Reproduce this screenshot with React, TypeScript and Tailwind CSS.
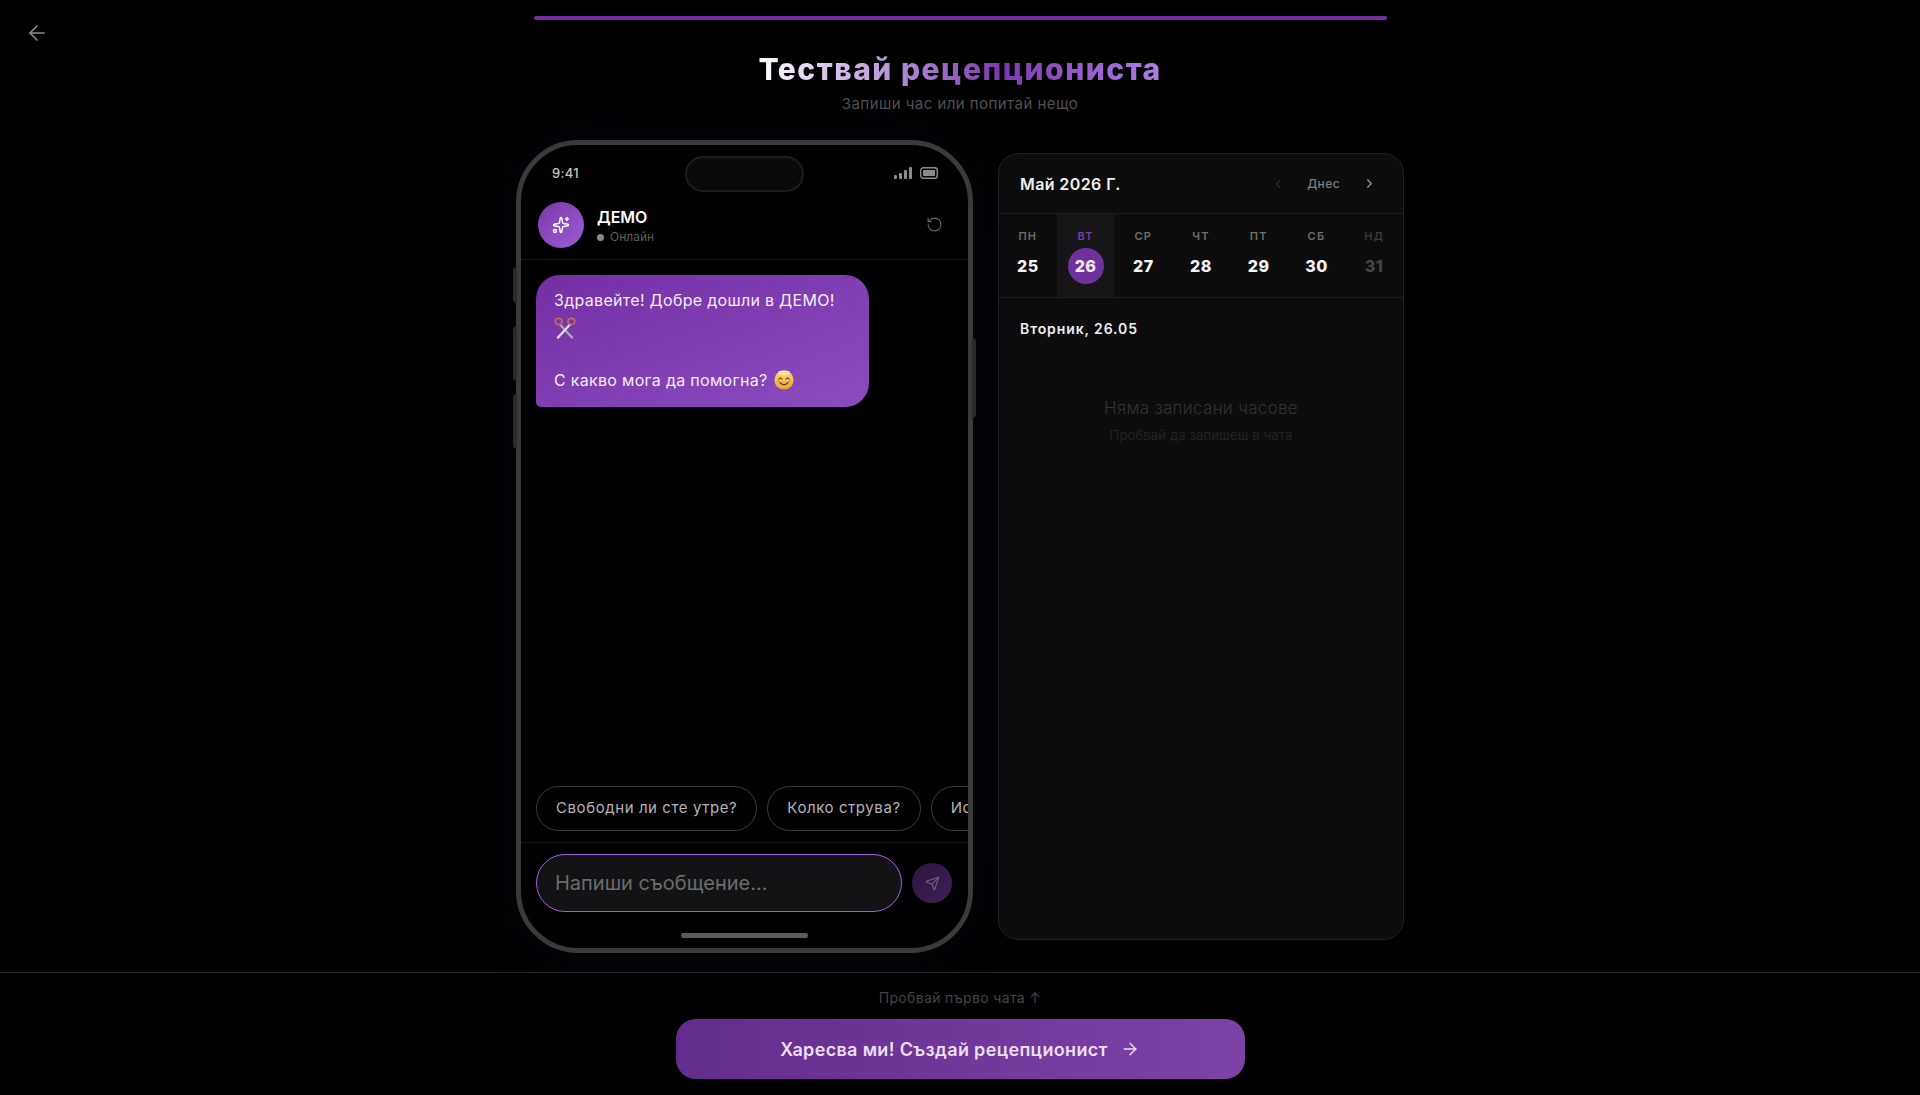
import { ArrowLeft, ArrowRight, ChevronLeft, ChevronRight, RotateCcw, Send, Sparkles } from "lucide-react";

const days = [
  { d: "ПН", n: "25" },
  { d: "ВТ", n: "26", active: true },
  { d: "СР", n: "27" },
  { d: "ЧТ", n: "28" },
  { d: "ПТ", n: "29" },
  { d: "СБ", n: "30" },
  { d: "НД", n: "31", dim: true },
];

function Scissors() {
  return (
    <svg width="22" height="22" viewBox="0 0 22 22" fill="none" className="inline-block align-[-6px]">
      <path d="M6.5 8 L18 20.5" stroke="#a9a9b0" strokeWidth="2.4" strokeLinecap="round" />
      <path d="M15.5 8 L4 20.5" stroke="#dcdce0" strokeWidth="2.4" strokeLinecap="round" />
      <ellipse cx="4.6" cy="4.4" rx="3.4" ry="3.1" stroke="#c9685e" strokeWidth="1.7" />
      <ellipse cx="17.4" cy="4.4" rx="3.4" ry="3.1" stroke="#c9685e" strokeWidth="1.7" />
    </svg>
  );
}

function Smile() {
  return (
    <svg width="20" height="20" viewBox="0 0 20 20" className="inline-block align-[-4px]">
      <defs>
        <linearGradient id="smileFace" x1="0" y1="0" x2="0" y2="1">
          <stop offset="0" stopColor="#f9dc7a" />
          <stop offset="1" stopColor="#eda52c" />
        </linearGradient>
      </defs>
      <circle cx="10" cy="10" r="9.6" fill="url(#smileFace)" />
      <ellipse cx="10" cy="2.6" rx="5.2" ry="1.5" fill="none" stroke="#fff4d6" strokeWidth="1.1" />
      <circle cx="4.6" cy="11.6" r="2" fill="#f29a5c" opacity="0.7" />
      <circle cx="15.4" cy="11.6" r="2" fill="#f29a5c" opacity="0.7" />
      <path d="M4.8 9 Q6.4 7 8 9" stroke="#5a3a14" strokeWidth="1.2" fill="none" strokeLinecap="round" />
      <path d="M12 9 Q13.6 7 15.2 9" stroke="#5a3a14" strokeWidth="1.2" fill="none" strokeLinecap="round" />
      <path d="M6 12.6 Q10 16.8 14 12.6" stroke="#5a3a14" strokeWidth="1.3" fill="none" strokeLinecap="round" />
    </svg>
  );
}

function Phone() {
  return (
    <div className="relative h-[813px] w-[457px] shrink-0">
      <div className="absolute left-[-3px] top-[127px] h-[36px] w-[4px] rounded-l-sm bg-[#2a2a2c]" />
      <div className="absolute left-[-3px] top-[186px] h-[55px] w-[4px] rounded-l-sm bg-[#2a2a2c]" />
      <div className="absolute left-[-3px] top-[254px] h-[55px] w-[4px] rounded-l-sm bg-[#2a2a2c]" />
      <div className="absolute right-[-3px] top-[198px] h-[80px] w-[4px] rounded-r-sm bg-[#2a2a2c]" />
      <div className="flex h-full w-full flex-col overflow-hidden rounded-[62px] border-[5px] border-[#3a3a3b] bg-black shadow-[0_0_60px_rgba(60,20,90,0.16)]">
        <div className="relative flex h-[57px] shrink-0 items-start justify-between pl-[31px] pr-[30px] pt-[20px]">
          <span className="text-[13px] font-medium leading-[16px] tracking-[0.3px] text-[#c4c4c4]">9:41</span>
          <div className="absolute left-[164px] top-[11px] h-[36px] w-[119px] rounded-full border-2 border-[#1c1c1e] bg-[#0a0a0c]" />
          <div className="flex items-center gap-[7px] pt-[1px]">
            <svg width="19" height="13" viewBox="0 0 19 13" fill="#8c8c8c">
              <rect x="0" y="9" width="3" height="4" rx="1" />
              <rect x="5" y="7" width="3" height="6" rx="1" />
              <rect x="10" y="4" width="3" height="9" rx="1" />
              <rect x="15" y="1" width="3" height="12" rx="1" />
            </svg>
            <svg width="18" height="12" viewBox="0 0 18 12" fill="none">
              <rect x="0.75" y="0.75" width="16.5" height="10.5" rx="2.5" stroke="#8c8c8c" strokeWidth="1.4" />
              <rect x="3" y="3" width="12" height="6" rx="1" fill="#8c8c8c" />
            </svg>
          </div>
        </div>
        <div className="flex h-[58px] shrink-0 items-start justify-between border-b border-[#141416] pl-[17px] pr-[25px]">
          <div className="flex items-start gap-[13px]">
            <div className="flex h-[46px] w-[46px] items-center justify-center rounded-full bg-gradient-to-br from-[#7b38a8] to-[#9c5cd4] text-white">
              <Sparkles size={18} strokeWidth={2} />
            </div>
            <div className="flex flex-col pt-[5px]">
              <span className="text-[16px] font-semibold leading-[20px] text-white">ДЕМО</span>
              <span className="mt-[1px] flex items-center gap-[6px] text-[12px] leading-[18px] text-[#5f5f5f]">
                <span className="h-[7px] w-[7px] rounded-full bg-[#8a8a8a]" />
                Онлайн
              </span>
            </div>
          </div>
          <RotateCcw size={17} strokeWidth={1.5} className="mt-[14px] text-[#6a6a6a]" />
        </div>
        <div className="flex-1 px-[15px] pt-[15px]">
          <div className="w-[333px] rounded-[24px] rounded-bl-[5px] bg-gradient-to-br from-[#742fa3] to-[#8c4cc0] px-[18px] pt-[12px] pb-[13px] text-[16px] leading-[26.7px] tracking-[0.3px] text-[#f3ecf8]">
            <p>Здравейте! Добре дошли в ДЕМО!</p>
            <p><Scissors /></p>
            <p className="mt-[26.7px]">
              С какво мога да помогна? <span className="ml-[2px]"><Smile /></span>
            </p>
          </div>
        </div>
        <div className="flex shrink-0 gap-[10px] overflow-hidden pb-[11px] pl-[15px]">
          {["Свободни ли сте утре?", "Колко струва?", "Искам да запиша час"].map((c) => (
            <div key={c} className="flex h-[45px] shrink-0 items-center rounded-full border border-[#3c3c3e] px-[19px] text-[15px] tracking-[0.58px] text-[#b4b4b4]">
              {c}
            </div>
          ))}
        </div>
        <div className="flex shrink-0 items-center gap-[10px] border-t border-[#141416] pl-[15px] pr-[16px] pt-[11px]">
          <div className="flex h-[58px] w-[366px] items-center rounded-full border-[1.5px] border-[#a45ee5] bg-[#131315] pl-[18px] text-[20px] text-[#6c6c6c]">
            Напиши съобщение...
          </div>
          <div className="flex h-[40px] w-[40px] items-center justify-center rounded-full bg-gradient-to-br from-[#2c1440] to-[#3e2058] text-[#6f6479]">
            <Send size={15} strokeWidth={1.8} />
          </div>
        </div>
        <div className="flex h-[36px] shrink-0 items-end justify-center pb-[10px]">
          <div className="h-[5px] w-[127px] rounded-full bg-[#5a5a5c]" />
        </div>
      </div>
    </div>
  );
}

function Calendar() {
  return (
    <div className="flex h-[787px] w-[406px] shrink-0 flex-col overflow-hidden rounded-[20px] border border-[#202023] bg-[#0d0d0e]">
      <div className="flex h-[60px] shrink-0 items-center justify-between border-b border-[#1e1e20] pl-[21px] pr-[26px]">
        <span className="text-[16px] font-semibold tracking-[0.4px] text-[#f0f0f0]">Май 2026 Г.</span>
        <div className="flex items-center gap-[22px]">
          <ChevronLeft size={14} strokeWidth={1.8} className="text-[#3a3a3a]" />
          <span className="text-[12px] font-medium tracking-[0.4px] text-[#7c7c7c]">Днес</span>
          <ChevronRight size={15} strokeWidth={1.8} className="text-[#9a9a9a]" />
        </div>
      </div>
      <div className="grid h-[84px] shrink-0 grid-cols-7 border-b border-[#1e1e20]">
        {days.map((x) => (
          <div key={x.n} className={`flex flex-col items-center pt-[14px] ${x.active ? "bg-[#161618]" : ""}`}>
            <span
              className={`text-[11px] font-semibold leading-[16px] tracking-[1.2px] ${
                x.active ? "text-[#7a3ca8]" : x.dim ? "text-[#3a3a3a]" : "text-[#6e6e6e]"
              }`}
            >
              {x.d}
            </span>
            <span
              className={`mt-[4px] flex h-[36px] w-[36px] items-center justify-center rounded-full text-[16px] font-extrabold tracking-[0.5px] ${
                x.active ? "bg-[#6f329c] text-white/90" : x.dim ? "text-[#444444]" : "text-[#f4f4f4]"
              }`}
            >
              {x.n}
            </span>
          </div>
        ))}
      </div>
      <div className="flex flex-1 flex-col px-[21px] pt-[21px]">
        <span className="text-[14px] font-semibold leading-[20px] tracking-[0.9px] text-[#eeeeee]">Вторник, 26.05</span>
        <div className="flex flex-col items-center pt-[56px]">
          <span className="text-[17px] font-light leading-[26px] tracking-[0.3px] text-[#333335]">Няма записани часове</span>
          <span className="mt-[4px] text-[13px] leading-[20px] tracking-[0.15px] text-[#232325]">Пробвай да запишеш в чата</span>
        </div>
      </div>
    </div>
  );
}

export default function App() {
  return (
    <div lang="bg" className="relative flex h-[1095px] flex-col overflow-hidden bg-black font-['Inter',sans-serif]">
      <ArrowLeft size={24} strokeWidth={1.6} className="absolute left-[25px] top-[21px] text-[#8e8e8e]" />
      <div className="mx-auto mt-[16px] h-[4px] w-[853px] shrink-0 rounded-full bg-[#71309c]" />
      <h1 className="mt-[29px] text-center text-[30px] font-extrabold leading-[40px] tracking-[1.5px]">
        <span className="bg-gradient-to-r from-white via-[#7d38ae] via-60% to-[#b07ee8] bg-clip-text text-transparent">
          Тествай рецепциониста
        </span>
      </h1>
      <p className="mt-[5px] text-center text-[15px] leading-[20px] tracking-[0.45px] text-[#505052]">Запиши час или попитай нещо</p>
      <div className="mt-[26px] flex flex-1 items-center justify-center gap-[25px] pb-[19px]">
        <Phone />
        <Calendar />
      </div>
      <div className="flex h-[123px] shrink-0 flex-col items-center border-t border-[#262628] pt-[16px]">
        <span className="text-[14px] leading-[18px] tracking-[0.35px] text-[#444446]">Пробвай първо чата ↑</span>
        <button className="mt-[12px] flex h-[60px] w-[569px] items-center justify-center gap-[12px] rounded-[20px] bg-gradient-to-r from-[#642c8c] to-[#7e42a6] text-[18px] font-semibold tracking-[0.33px] text-[#e9dff0]">
          Харесва ми! Създай рецепционист
          <ArrowRight size={20} strokeWidth={1.6} />
        </button>
      </div>
    </div>
  );
}
